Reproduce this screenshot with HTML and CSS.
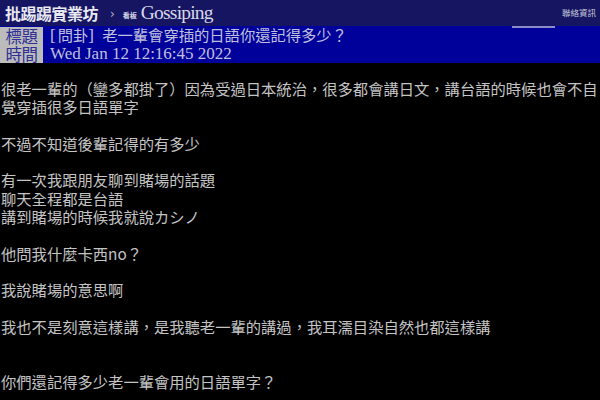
FILE: index.html
```html
<!DOCTYPE html>
<html lang="zh-Hant">
<head>
    <meta charset="UTF-8">
    <meta name="viewport" content="width=device-width, initial-scale=1.0">
    <title>[問卦] 老一輩會穿插的日語你還記得多少？ - 看板 Gossiping - 批踢踢實業坊</title>
    <link rel="stylesheet" href="styles.css">
</head>
<body>
    <!-- Top bar -->
    <div class="topbar">
        <a class="brand" href="#">批踢踢實業坊</a>
        <span class="sep">›</span>
        <a class="board" href="#"><span class="board-label">看板</span>Gossiping</a>
        <a class="contact" href="#">聯絡資訊</a>
    </div>

    <!-- Article meta -->
    <div class="meta">
        <div class="metaline">
            <span class="tag">標題</span>
            <span class="value"><span class="half">[</span>問卦<span class="half">] </span>老一輩會穿插的日語你還記得多少？</span>
            <span class="tab-mark"></span>
        </div>
        <div class="metaline">
            <span class="tag">時間</span>
            <span class="value date">Wed Jan 12 12:16:45 2022</span>
        </div>
    </div>

    <!-- Article body -->
    <div class="content">
        <div class="line">很老一輩的（鑾多都掛了）因為受過日本統治，很多都會講日文，講台語的時候也會不自</div>
        <div class="line">覺穿插很多日語單字</div>
        <div class="line"></div>
        <div class="line">不過不知道後輩記得的有多少</div>
        <div class="line"></div>
        <div class="line">有一次我跟朋友聊到賭場的話題</div>
        <div class="line">聊天全程都是台語</div>
        <div class="line">講到賭場的時候我就說カシノ</div>
        <div class="line"></div>
        <div class="line">他問我什麼卡西no？</div>
        <div class="line"></div>
        <div class="line">我說賭場的意思啊</div>
        <div class="line"></div>
        <div class="line">我也不是刻意這樣講，是我聽老一輩的講過，我耳濡目染自然也都這樣講</div>
        <div class="line"></div>
        <div class="line"></div>
        <div class="line">你們還記得多少老一輩會用的日語單字？</div>
    </div>
</body>
</html>
```

FILE: styles.css
```css
/* General */
body {
    margin: 0;
    padding: 0;
    background: #000;
    color: #c4c4c4;
    font-family: 'Liberation Serif', 'Noto Sans CJK TC', serif;
    font-size: 15.3px;
    overflow: hidden;
}

a {
    color: inherit;
    text-decoration: none;
}

/* Top bar */
.topbar {
    height: 26px;
    background: #151562;
    display: flex;
    align-items: center;
    padding: 0 4px 0 5px;
}

.brand {
    color: #e8e8f0;
    font-family: 'Noto Sans CJK TC', sans-serif;
    font-size: 16px;
    font-weight: bold;
    letter-spacing: -0.5px;
}

.sep {
    color: #b8b8d0;
    font-family: 'DejaVu Sans', sans-serif;
    font-size: 12px;
    margin: 2px 8px 0 12px;
}

.board {
    color: #d8d8e8;
    font-size: 19.5px;
    letter-spacing: -0.8px;
    display: flex;
    align-items: center;
}

.board-label {
    font-family: 'Noto Sans CJK TC', sans-serif;
    font-size: 7px;
    font-weight: bold;
    letter-spacing: 0;
    margin-right: 4px;
    margin-top: 3px;
}

.contact {
    margin-left: auto;
    margin-top: -3px;
    font-family: 'Noto Sans CJK TC', sans-serif;
    font-size: 8.5px;
    color: #c8c8dc;
}

/* Meta lines */
.meta {
    background: #00009a;
    padding-top: 1px;
}

.metaline {
    display: flex;
    height: 18px;
    line-height: 18px;
}

.tag {
    width: 43px;
    flex: none;
    background: #bcbcbc;
    color: #2f2f95;
    font-family: 'Noto Sans CJK TC', sans-serif;
    font-size: 16.5px;
    text-align: center;
    letter-spacing: -0.5px;
}

.value {
    color: #c0c0dc;
    padding-left: 7px;
    white-space: nowrap;
}

.half {
    font-size: 17px;
    letter-spacing: 2px;
}

.date {
    font-size: 17px;
}

.tab-mark {
    width: 43px;
    height: 2px;
    margin: -1px 45px 0 auto;
    background: #8c8cc8;
}

/* Content */
.content {
    padding: 16px 0 0 1px;
    font-family: 'Noto Sans CJK TC', sans-serif;
}

.line {
    height: 18.3px;
    line-height: 18.3px;
    white-space: nowrap;
}
```
